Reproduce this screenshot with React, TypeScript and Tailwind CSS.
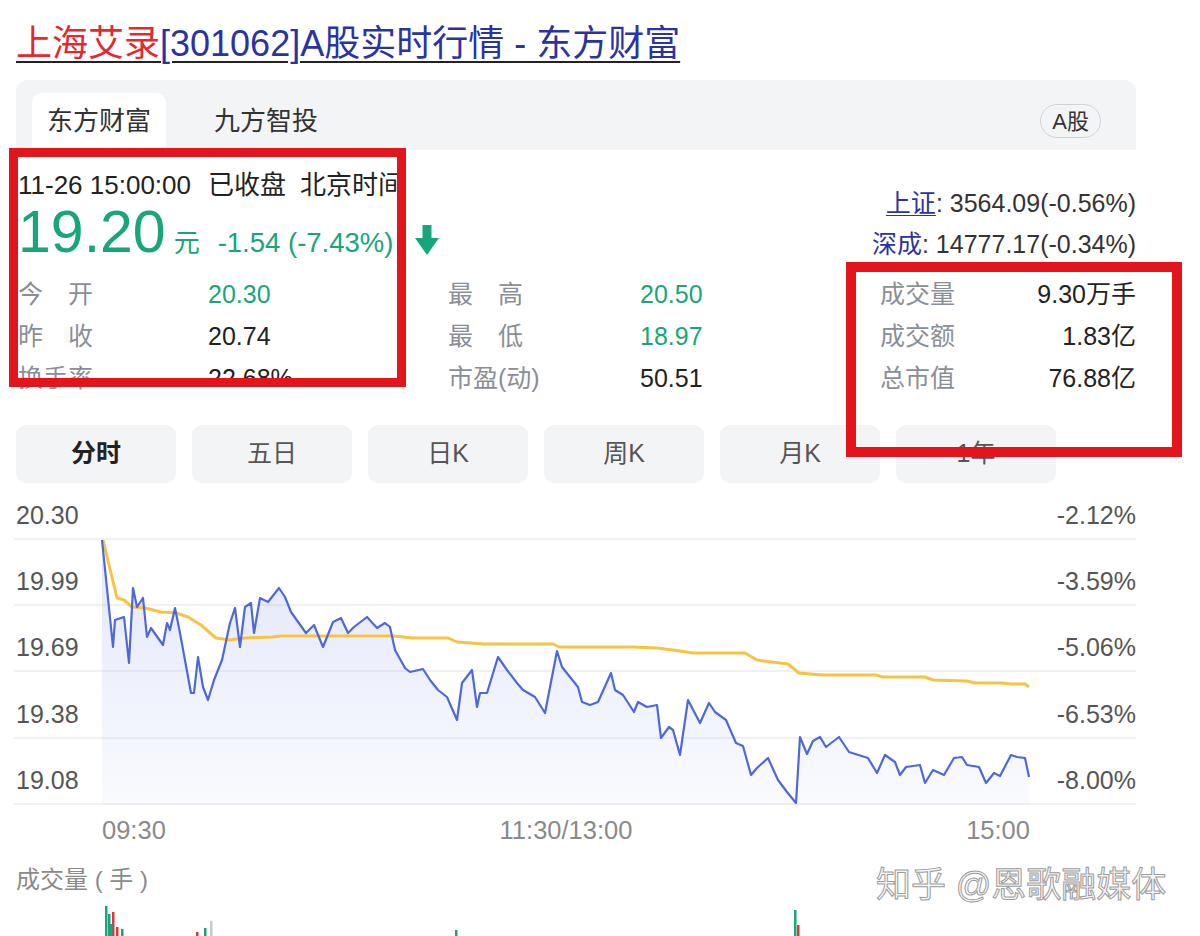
import React from 'react';

// Intraday price (blue) and average price (yellow), in chart pixel space
const priceLine =
  '102,540 113,647 115,620 124,617 129,663 133,588 137,607 143,598 147,637 151,628 163,645 167,623 170,630 175,608 180,633 191,693 194,693 198,657 203,687 208,700 214,680 222,660 230,623 235,608 240,647 245,607 251,603 254,633 260,598 268,602 279,588 285,597 291,612 306,633 314,625 323,647 333,622 341,618 348,633 354,627 367,617 377,628 385,623 390,627 395,650 405,668 410,672 423,669 430,680 438,690 447,697 457,720 462,683 472,670 477,707 480,693 487,693 498,657 507,670 517,683 523,690 535,697 545,713 557,651 562,667 570,677 578,687 582,702 590,705 598,702 611,673 615,690 623,695 634,712 638,702 647,707 657,705 661,738 669,727 673,730 680,755 688,700 700,723 709,703 715,712 726,720 736,743 743,746 751,775 757,768 768,758 778,780 787,792 796,803 800,737 807,754 813,741 820,737 826,747 839,737 849,752 868,758 877,773 885,755 895,762 900,775 906,767 920,765 925,783 933,770 944,775 954,758 962,757 967,765 979,767 986,783 994,773 1000,776 1011,755 1017,757 1025,758 1029,777';

const avgLine =
  '103,540 117,598 124,600 132,607 145,608 161,612 176,613 188,617 201,625 209,632 216,638 230,640 245,638 272,637 281,636 394,636 413,638 448,638 457,642 484,644 553,644 559,647 633,647 657,648 680,651 693,653 745,653 757,660 788,664 799,673 822,675 876,675 883,677 925,677 933,680 967,681 975,683 1002,683 1010,684 1025,684 1029,687';

const volumeBars = [
  { x: 105, top: 6, color: '#19a57b' },
  { x: 108, top: 14, color: '#19a57b' },
  { x: 112, top: 12, color: '#e8323a' },
  { x: 110, top: 24, color: '#19a57b' },
  { x: 116, top: 27, color: '#e8323a' },
  { x: 121, top: 29, color: '#19a57b' },
  { x: 196, top: 32, color: '#e8323a' },
  { x: 204, top: 28, color: '#19a57b' },
  { x: 210, top: 21, color: '#c8c8c8' },
  { x: 455, top: 30, color: '#19a57b' },
  { x: 794, top: 10, color: '#19a57b' },
  { x: 797, top: 25, color: '#e8323a' },
];

type Cell = { label: string; value: string; green?: boolean };

const statRows: Cell[][] = [
  [
    { label: '今　开', value: '20.30', green: true },
    { label: '最　高', value: '20.50', green: true },
    { label: '成交量', value: '9.30万手' },
  ],
  [
    { label: '昨　收', value: '20.74' },
    { label: '最　低', value: '18.97', green: true },
    { label: '成交额', value: '1.83亿' },
  ],
  [
    { label: '换手率', value: '22.68%' },
    { label: '市盈(动)', value: '50.51' },
    { label: '总市值', value: '76.88亿' },
  ],
];

const periods = ['分时', '五日', '日K', '周K', '月K', '1年'];

const axisRows = [
  { price: '20.30', pct: '-2.12%', h: 'h-[57px]' },
  { price: '19.99', pct: '-3.59%', h: 'h-[66px]' },
  { price: '19.69', pct: '-5.06%', h: 'h-[66px]' },
  { price: '19.38', pct: '-6.53%', h: 'h-[67px]' },
  { price: '19.08', pct: '-8.00%', h: 'h-[66px]' },
];

function DownArrow() {
  return (
    <svg width="24" height="30" viewBox="0 0 24 30" className="ml-[22px] self-center mt-[12px]">
      <rect x="7.5" y="0" width="9" height="15" fill="#19a57b" />
      <polygon points="0,13 24,13 12,30" fill="#19a57b" />
    </svg>
  );
}

export default function App() {
  return (
    <div className="relative h-screen w-full overflow-hidden bg-white font-['Liberation_Sans','Noto_Sans_CJK_SC',sans-serif] text-[#222]">
      <div className="pl-[16px] pr-[64px] pt-[22px]">
        {/* Page title */}
        <h1 className="text-[36px] leading-[44px] underline decoration-[2px] underline-offset-[5px]">
          <span className="text-[#e8262e]">上海艾录</span>
          <span className="text-[#2b33a3]">[301062]A股实时行情 - 东方财富</span>
        </h1>

        {/* Source tabs */}
        <div className="mt-[14px] flex h-[70px] items-end justify-between rounded-t-[12px] bg-[#f3f4f6] pl-[16px] pr-[35px]">
          <div className="flex items-end">
            <div className="flex h-[57px] items-center rounded-t-[10px] bg-white px-[15px] text-[26px] text-[#333]">东方财富</div>
            <div className="ml-[33px] flex h-[57px] items-center px-[15px] text-[26px] text-[#333]">九方智投</div>
          </div>
          <div className="mb-[12px] flex h-[34px] items-center rounded-full border-[1.5px] border-[#d2d2d2] px-[11px] text-[22px] text-[#333]">
            A股
          </div>
        </div>

        {/* Quote header */}
        <div className="mt-[20px] flex justify-between">
          <div>
            <div className="flex text-[26px] leading-[30px] pl-[2px]">
              <span>11-26 15:00:00</span>
              <span className="ml-[17px]">已收盘</span>
              <span className="ml-[14px]">北京时间</span>
            </div>
            <div className="flex h-[68px] items-baseline pl-[2px] text-[#19a57b]">
              <span className="text-[59px] leading-[64px]">19.20</span>
              <span className="ml-[8px] text-[26px]">元</span>
              <span className="ml-[18px] text-[27.5px]">-1.54 (-7.43%)</span>
              <DownArrow />
            </div>
          </div>
          <div className="flex flex-col items-end pt-[13px] text-[25px] leading-[41px]">
            <div>
              <span className="text-[#2b33a3] underline decoration-[1px] underline-offset-[3px]">上证</span>
              <span className="text-[#333]">: 3564.09(-0.56%)</span>
            </div>
            <div>
              <span className="text-[#2b33a3]">深成</span>
              <span className="text-[#333]">: 14777.17(-0.34%)</span>
            </div>
          </div>
        </div>

        {/* Key figures */}
        <div className="mt-[6px] grid grid-cols-[192px_240px_192px_240px_1fr] text-[25px]">
          {statRows.map((row, i) => (
            <React.Fragment key={i}>
              <div className="flex h-[42px] items-center pl-[2px] text-[#8a8e96]">{row[0].label}</div>
              <div className={`flex h-[42px] items-center ${row[0].green ? 'text-[#19a57b]' : 'text-[#222]'}`}>{row[0].value}</div>
              <div className="flex h-[42px] items-center text-[#8a8e96]">{row[1].label}</div>
              <div className={`flex h-[42px] items-center ${row[1].green ? 'text-[#19a57b]' : 'text-[#222]'}`}>{row[1].value}</div>
              <div className="flex h-[42px] items-center justify-between">
                <span className="text-[#8a8e96]">{row[2].label}</span>
                <span className="text-[#222]">{row[2].value}</span>
              </div>
            </React.Fragment>
          ))}
        </div>

        {/* Period switch */}
        <div className="mt-[25px] flex gap-[16px]">
          {periods.map((p, i) => (
            <div
              key={p}
              className={`flex h-[58px] w-[160px] items-center justify-center rounded-[10px] bg-[#f3f4f6] text-[25px] ${
                i === 0 ? 'font-bold text-[#222]' : 'text-[#555]'
              }`}
            >
              {p}
            </div>
          ))}
        </div>

        {/* Intraday chart */}
        <div className="relative ml-[-2px]">
          {axisRows.map((r) => (
            <div
              key={r.price}
              className={`${r.h} flex items-end justify-between border-b-2 border-[#f1f1f3] pb-[8px] pl-[2px] text-[25px] leading-[30px] text-[#555]`}
            >
              <span>{r.price}</span>
              <span>{r.pct}</span>
            </div>
          ))}
          <svg className="absolute inset-0 h-full w-full" viewBox="14 483 1122 322" preserveAspectRatio="none">
            <defs>
              <linearGradient id="areaFill" gradientUnits="userSpaceOnUse" x1="0" y1="540" x2="0" y2="805">
                <stop offset="0" stopColor="#5470e0" stopOpacity="0.17" />
                <stop offset="1" stopColor="#5470e0" stopOpacity="0.03" />
              </linearGradient>
            </defs>
            <polygon points={`${priceLine} 1029,805 102,805`} fill="url(#areaFill)" />
            <polyline points={avgLine} fill="none" stroke="#f5c443" strokeWidth="3" strokeLinejoin="round" />
            <polyline points={priceLine} fill="none" stroke="#4e68dc" strokeWidth="2.2" strokeLinejoin="round" />
          </svg>
        </div>

        <div className="mt-[10px] flex justify-between pl-[86px] pr-[106px] text-[25.5px] leading-[30px] text-[#8a8a8a]">
          <span>09:30</span>
          <span>11:30/13:00</span>
          <span>15:00</span>
        </div>

        <div className="mt-[20px] text-[24px] leading-[30px] text-[#8a8a8a]">成交量 ( 手 )</div>

        <svg width="1120" height="45" viewBox="16 895 1120 45" className="block">
          {volumeBars.map((b, i) => (
            <rect key={i} x={b.x} y={900 + b.top} width="2.5" height={40 - b.top} fill={b.color} />
          ))}
        </svg>
      </div>

      {/* Highlight frames */}
      <div className="absolute left-[9px] top-[148px] h-[239px] w-[397px] border-[9px] border-[#e3141c]" />
      <div className="absolute left-[846px] top-[262px] h-[195px] w-[336px] border-[10px] border-[#e3141c]" />

      <div className="absolute left-[876px] top-[864px] text-[35px] leading-[42px] text-[#f7f7f7] [-webkit-text-stroke:1px_#9c9c9c]">
        知乎 @恩歌融媒体
      </div>
    </div>
  );
}
